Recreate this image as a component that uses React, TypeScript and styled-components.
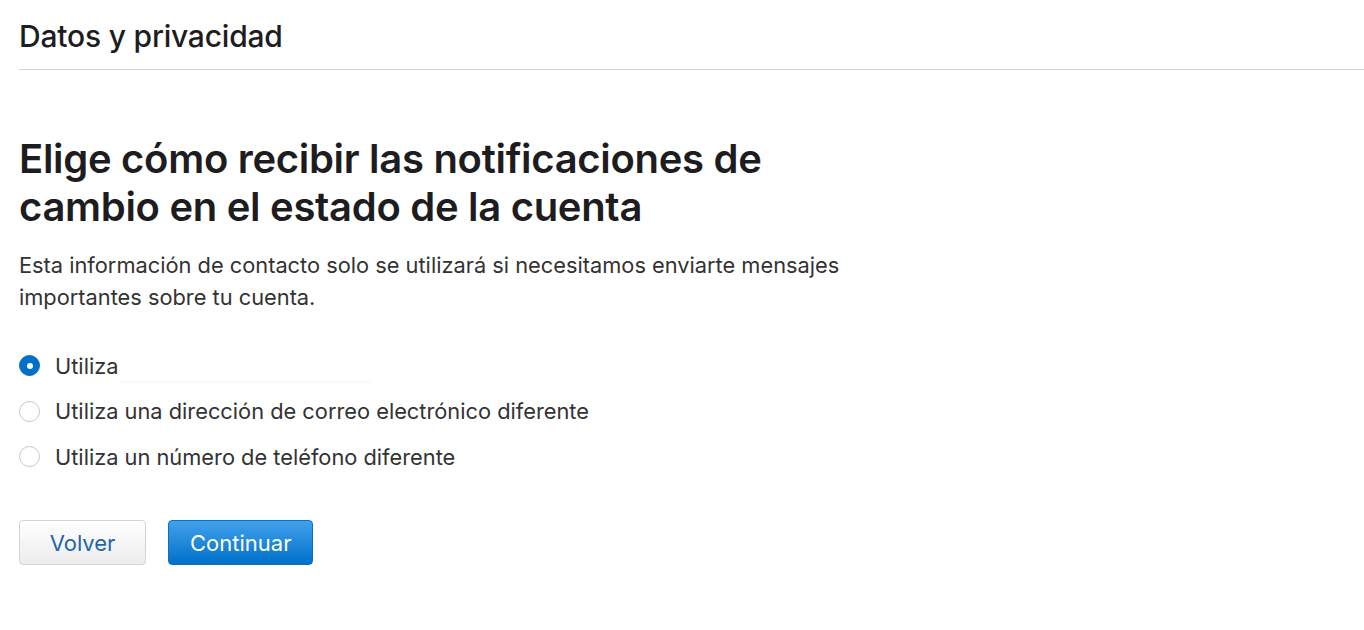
import styled, { createGlobalStyle } from "styled-components";

const GlobalStyle = createGlobalStyle`
  body {
    margin: 0;
    background: #fff;
    font-family: Inter, "Liberation Sans", sans-serif;
    -webkit-font-smoothing: antialiased;
  }
`;

const Page = styled.div`
  padding: 0 0 0 19px;
`;

const TopBar = styled.header`
  height: 70px;
  border-bottom: 1px solid #d2d2d7;
  display: flex;
  align-items: center;
  padding-top: 3px;
  box-sizing: border-box;
`;

const TopTitle = styled.h2`
  margin: 0;
  font-size: 30px;
  font-weight: 500;
  color: #1d1d1f;
  letter-spacing: -0.2px;
`;

const Content = styled.main`
  padding-top: 65px;
  max-width: 900px;
`;

const Heading = styled.h1`
  margin: 0;
  font-size: 40px;
  line-height: 48px;
  font-weight: 600;
  color: #1d1d1f;
  letter-spacing: -0.3px;
`;

const Intro = styled.p`
  margin: 18px 0 0;
  font-size: 21.8px;
  line-height: 32px;
  color: #333;
  max-width: 840px;
`;

const Options = styled.div`
  margin-top: 36px;
  display: flex;
  flex-direction: column;
  gap: 12.5px;
`;

const Option = styled.label`
  display: flex;
  align-items: center;
  height: 33px;
  gap: 15px;
  font-size: 21.8px;
  color: #333;
  cursor: pointer;
`;

const Radio = styled.span<{ $checked?: boolean }>`
  width: 21px;
  height: 21px;
  border-radius: 50%;
  box-sizing: border-box;
  flex-shrink: 0;
  display: flex;
  align-items: center;
  justify-content: center;
  background: ${(p) => (p.$checked ? "#0070c9" : "#fff")};
  border: 1px solid ${(p) => (p.$checked ? "#0070c9" : "#c6c6c6")};
  &::after {
    content: "";
    width: 6px;
    height: 6px;
    border-radius: 50%;
    background: #fff;
    display: ${(p) => (p.$checked ? "block" : "none")};
  }
`;

const Redacted = styled.span`
  display: inline-block;
  width: 256px;
  height: 33px;
  margin-left: -15px;
  margin-top: -2px;
  background: #fff;
  box-shadow: 0 3px 4px -2px rgba(0, 0, 0, 0.05);
`;

const Actions = styled.div`
  margin-top: 47px;
  display: flex;
  gap: 22px;
  align-items: center;
`;

const Button = styled.button<{ $primary?: boolean }>`
  height: 45px;
  min-width: ${(p) => (p.$primary ? "auto" : "127px")};
  padding: 0 21px;
  font-family: Inter, "Liberation Sans", sans-serif;
  font-size: 22px;
  border-radius: 4px;
  cursor: pointer;
  color: ${(p) => (p.$primary ? "#fff" : "#1f64ad")};
  background: ${(p) =>
    p.$primary
      ? "linear-gradient(#42a1ec, #0070c9)"
      : "linear-gradient(#ffffff, #ececec)"};
  border: 1px solid ${(p) => (p.$primary ? "#0a70c3" : "#d4d4d4")};
`;

export default function App() {
  return (
    <Page>
      <GlobalStyle />
      <TopBar>
        <TopTitle>Datos y privacidad</TopTitle>
      </TopBar>
      <Content>
        <Heading>
          Elige cómo recibir las notificaciones de
          <br />
          cambio en el estado de la cuenta
        </Heading>
        <Intro>
          Esta información de contacto solo se utilizará si necesitamos enviarte mensajes importantes sobre tu cuenta.
        </Intro>
        <Options>
          <Option>
            <Radio $checked />
            <span>Utiliza</span>
            <Redacted />
          </Option>
          <Option>
            <Radio />
            Utiliza una dirección de correo electrónico diferente
          </Option>
          <Option>
            <Radio />
            Utiliza un número de teléfono diferente
          </Option>
        </Options>
        <Actions>
          <Button>Volver</Button>
          <Button $primary>Continuar</Button>
        </Actions>
      </Content>
    </Page>
  );
}
